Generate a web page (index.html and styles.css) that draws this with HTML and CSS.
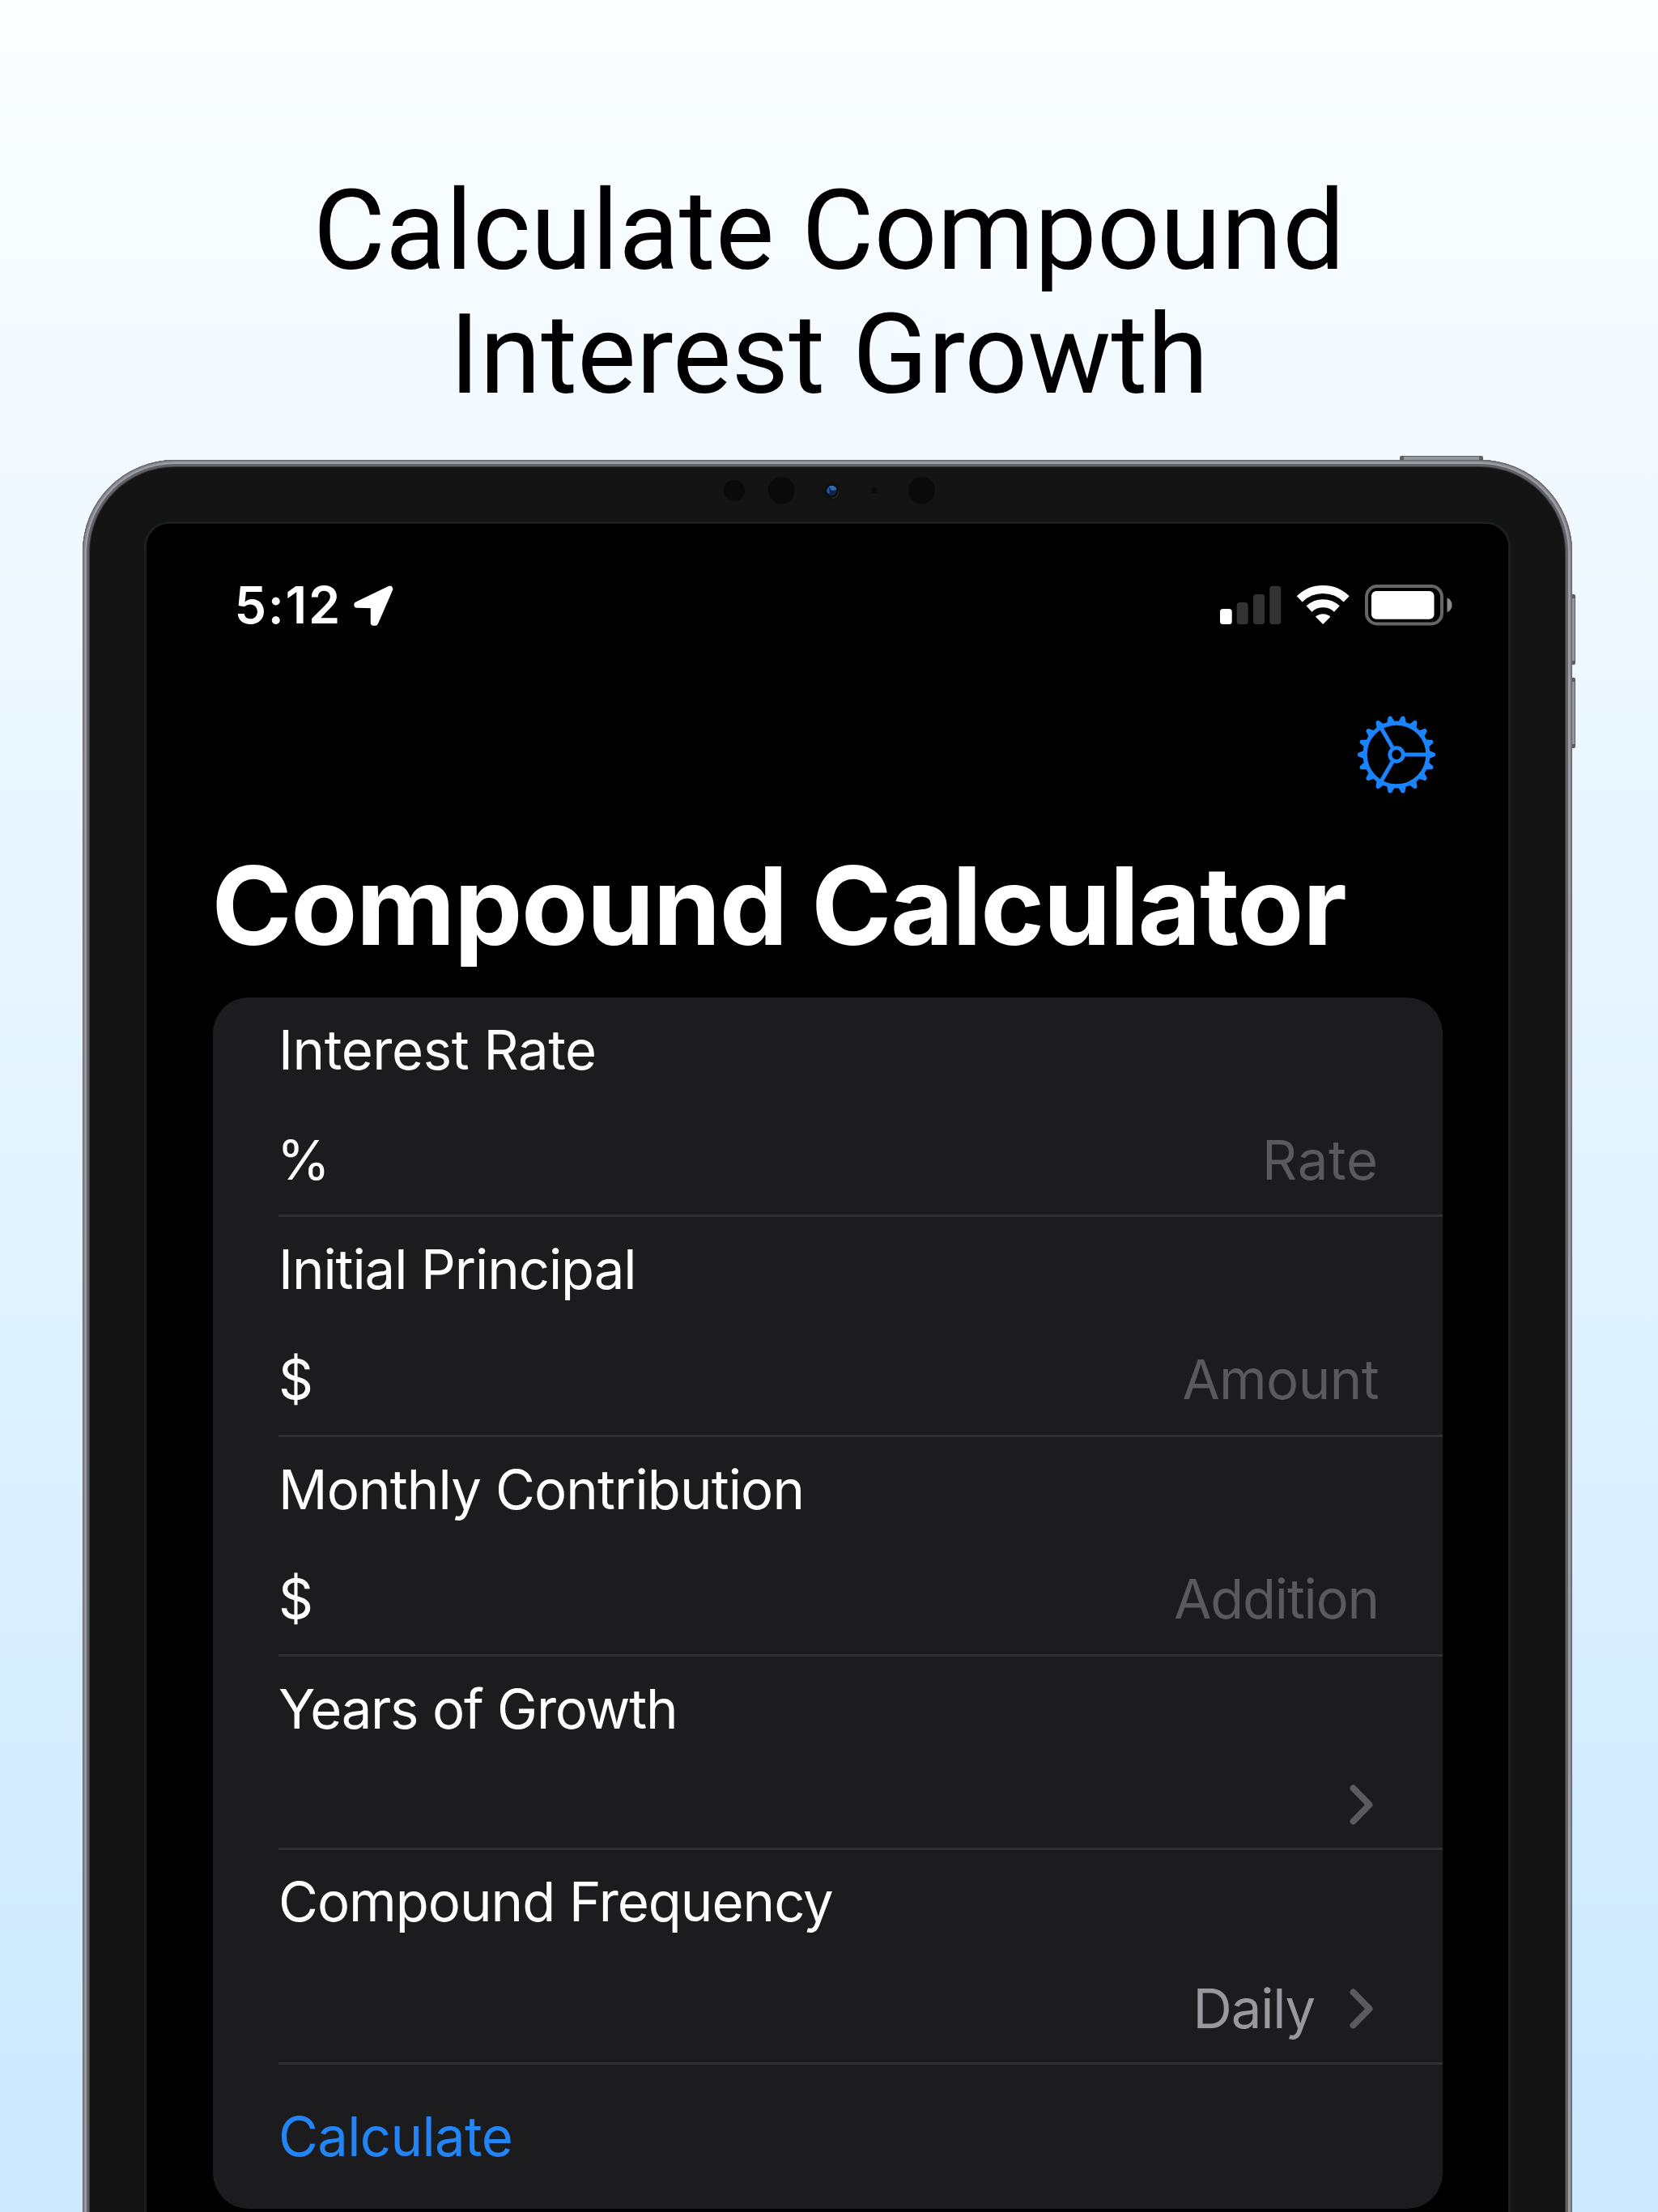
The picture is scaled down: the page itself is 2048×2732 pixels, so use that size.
FILE: index.html
```html
<!DOCTYPE html>
<html lang="en">
<head>
<meta charset="utf-8">
<title>Compound Calculator</title>
<link rel="stylesheet" href="styles.css">
</head>
<body>
<main class="page">
  <h1 class="headline">Calculate Compound<br>Interest Growth</h1>
  <div class="device">
    <span class="button button-power"></span>
    <span class="button button-up"></span>
    <span class="button button-down"></span>
    <div class="bezel">
      <svg class="sensors" width="280" height="40" viewBox="887 586 280 40">
        <g fill="#0a0a0a"><circle cx="907" cy="605.7" r="13"/><circle cx="965.3" cy="605.7" r="16.5"/><circle cx="1080" cy="605.7" r="3.4"/><circle cx="1138.5" cy="605.7" r="16.5"/></g>
        <circle cx="1027.5" cy="606" r="11" fill="#111"/>
        <path d="M1036 607a8.500 8.500 0 0 1-8.500 8.500" fill="none" stroke="#2a2a28" stroke-width="1.500"/>
        <circle cx="1027.300" cy="606" r="7.500" fill="#07090d"/>
        <circle cx="1027.300" cy="606" r="6.300" fill="#0e2448"/>
        <path d="M1027.300 606L1024 600.600a6.300 6.300 0 0 1 9.500 4.500z" fill="#2d6cb0"/>
        <path d="M1022 603a6 6 0 0 0 0 6l2.500 1v-9z" fill="#23589a"/>
      </svg>
      <div class="screen">
        <div class="status">
          <span class="time">5:12</span>
          <svg class="location" width="52" height="52" viewBox="0 -2 52 52"><path d="M5 24L45.500 4.500L27.500 46L25.500 46V24.500Z" fill="#fff" stroke="#fff" stroke-width="7.500" stroke-linejoin="round"/></svg>
          <svg class="signals" width="290" height="52" viewBox="1506 721 290 52">
            <rect x="1507" y="752" width="14.700" height="19" rx="3.500" fill="#fff"/>
            <g fill="#333"><rect x="1527.700" y="744" width="14" height="27" rx="3.500"/><rect x="1548" y="734" width="14" height="37" rx="3.500"/><rect x="1568.300" y="723.700" width="14" height="47.300" rx="3.500"/></g>
            <g fill="none" stroke="#fff" stroke-width="10"><path d="M1605.200 739.800a41.500 41.500 0 0 1 58 0"/><path d="M1617 752a25 25 0 0 1 34.400 0"/></g>
            <path d="M1634.200 771L1625 761.800a13.500 13.500 0 0 1 18.400 0z" fill="#fff"/>
            <rect x="1688" y="724" width="93" height="46.500" rx="13" fill="none" stroke="#666" stroke-width="4"/>
            <rect x="1694" y="730" width="77.500" height="34.700" rx="6" fill="#fff"/>
            <path d="M1787.500 738.500c8 2.500 8 15 0 17.500z" fill="#8a8a8a"/>
          </svg>
        </div>
        <div class="toolbar">
          <svg class="gear" width="100" height="100" viewBox="-50 -50 100 100">
            <g fill="none" stroke="#1a84ff">
              <circle r="38.900" stroke-width="5.200"/>
              <circle r="8.300" stroke-width="4.800"/>
              <path d="M10 0H38M-5 8.660L-19 32.900M-5-8.660L-19-32.900" stroke-width="5"/>
            </g>
            <g id="teeth" fill="#1a84ff">
              <g id="third"><path id="tooth" d="M39-5.500L47.600-2Q48.800 0 47.600 2L39 5.500z"/><use href="#tooth" transform="rotate(20)"/><use href="#tooth" transform="rotate(40)"/><use href="#tooth" transform="rotate(60)"/><use href="#tooth" transform="rotate(80)"/><use href="#tooth" transform="rotate(100)"/></g>
              <use href="#third" transform="rotate(120)"/><use href="#third" transform="rotate(240)"/>
            </g>
          </svg>
        </div>
        <h2 class="title">Compound Calculator</h2>
        <section class="card">
          <div class="row row-rate"><div class="label">Interest Rate</div><div class="field"><span class="percent">%</span><span class="hint">Rate</span></div></div>
          <div class="row row-principal"><div class="label">Initial Principal</div><div class="field"><span>$</span><span class="hint">Amount</span></div></div>
          <div class="row row-monthly"><div class="label">Monthly Contribution</div><div class="field"><span>$</span><span class="hint">Addition</span></div></div>
          <div class="row row-years"><div class="label">Years of Growth</div><div class="field field-end"><svg class="chevron" width="30" height="50" viewBox="0 0 30 50"><path d="M4.500 4.500L24.500 25L4.500 45.500"/></svg></div></div>
          <div class="row row-frequency"><div class="label">Compound Frequency</div><div class="field field-end"><span class="value">Daily</span><svg class="chevron" width="30" height="50" viewBox="0 0 30 50"><path d="M4.500 4.500L24.500 25L4.500 45.500"/></svg></div></div>
          <div class="action">Calculate</div>
        </section>
      </div>
    </div>
  </div>
</main>
</body>
</html>
```
FILE: styles.css
```css
* { box-sizing: border-box; }
body { margin: 0; }
.page {
  width: 2048px;
  height: 2732px;
  overflow: hidden;
  background: linear-gradient(#fbfeff, #cce9ff);
  font-family: Inter, "Liberation Sans", sans-serif;
}
.headline {
  height: 568px;
  margin: 0;
  padding-top: 209px;
  color: #000;
  font: 400 137px/153px Roboto, sans-serif;
  text-align: center;
}
.device {
  position: relative;
  width: 1840px;
  height: 2300px;
  margin-left: 102px;
}
.button {
  position: absolute;
  background: #96969e;
  border: 1px solid #5d5d63;
}
.button-power { left: 1627px; top: -5px; width: 103px; height: 8px; border-radius: 2px 2px 0 0; border-left-width: 5px; border-right-width: 5px; }
.button-up, .button-down { left: 1836px; width: 8px; height: 87px; border-radius: 0 2px 2px 0; border-top-width: 5px; border-bottom-width: 5px; }
.button-up { top: 166px; }
.button-down { top: 269px; }
.bezel {
  position: relative;
  display: flex;
  flex-direction: column;
  align-items: center;
  height: 2300px;
  border-radius: 114px;
  background: #141414;
  box-shadow: inset 0 0 0 1px #5f5f64, inset 0 0 0 3px #88888f, inset 0 0 0 5px #a0a0a8, inset 0 0 0 8px #626268, inset 0 0 0 9px #3a3a3d;
}
.sensors { margin: 18px 0 18px 10px; }
.screen {
  width: 1688px;
  height: 2200px;
  border: 3px solid #1a1f1f;
  border-radius: 31px;
  background: #000;
  color: #fff;
}
.status {
  display: flex;
  align-items: center;
  height: 52px;
  margin: 74px 67px 0 108.5px;
}
.time { font-size: 63px; font-weight: 600; line-height: 52px; letter-spacing: 1.7px; }
.location { margin-left: 14px; }
.signals { margin-left: auto; }
.toolbar {
  display: flex;
  justify-content: flex-end;
  margin: 109px 88.5px 0 0;
}
.title {
  margin: 56px 0 0 80.5px;
  font-size: 134px;
  font-weight: 700;
  line-height: 160px;
  letter-spacing: -1.4px;
  white-space: nowrap;
}
.card {
  width: 1519px;
  height: 1496px;
  margin: 34px 0 0 82px;
  padding-left: 81px;
  border-radius: 44px;
  background: #1c1c1e;
  font-size: 67px;
  font-weight: 430;
}
.row {
  display: grid;
  grid-template-rows: 130px 1fr;
  height: 271.3px;
  border-bottom: 3px solid #303032;
}
.row-years { height: 239px; grid-template-rows: 129px 1fr; }
.row-frequency { height: 265px; grid-template-rows: 128px 1fr; }
.label { line-height: 130px; }
.row-rate .label { letter-spacing: -0.4px; }
.row-principal .label { letter-spacing: -1.07px; }
.row-monthly .label { letter-spacing: -0.87px; }
.row-years .label { line-height: 129px; letter-spacing: -1.2px; }
.row-frequency .label { line-height: 128px; letter-spacing: -1px; }
.field {
  display: flex;
  align-items: center;
  justify-content: space-between;
  padding: 2px 79px 0 0;
}
.field-end { justify-content: flex-end; padding-right: 85px; }
.percent { margin-left: -2px; }
.hint { color: #5a5a5e; }
.row-rate .hint { letter-spacing: 0.8px; }
.row-principal .hint { letter-spacing: -0.6px; }
.row-monthly .hint { letter-spacing: -1.2px; }
.value { margin-right: 43px; color: #98989f; letter-spacing: -1.2px; }
.chevron { fill: none; stroke: #5b5b5e; stroke-width: 8px; stroke-linecap: round; stroke-linejoin: round; }
.action { color: #2385f5; line-height: 178px; letter-spacing: -0.64px; }
```
